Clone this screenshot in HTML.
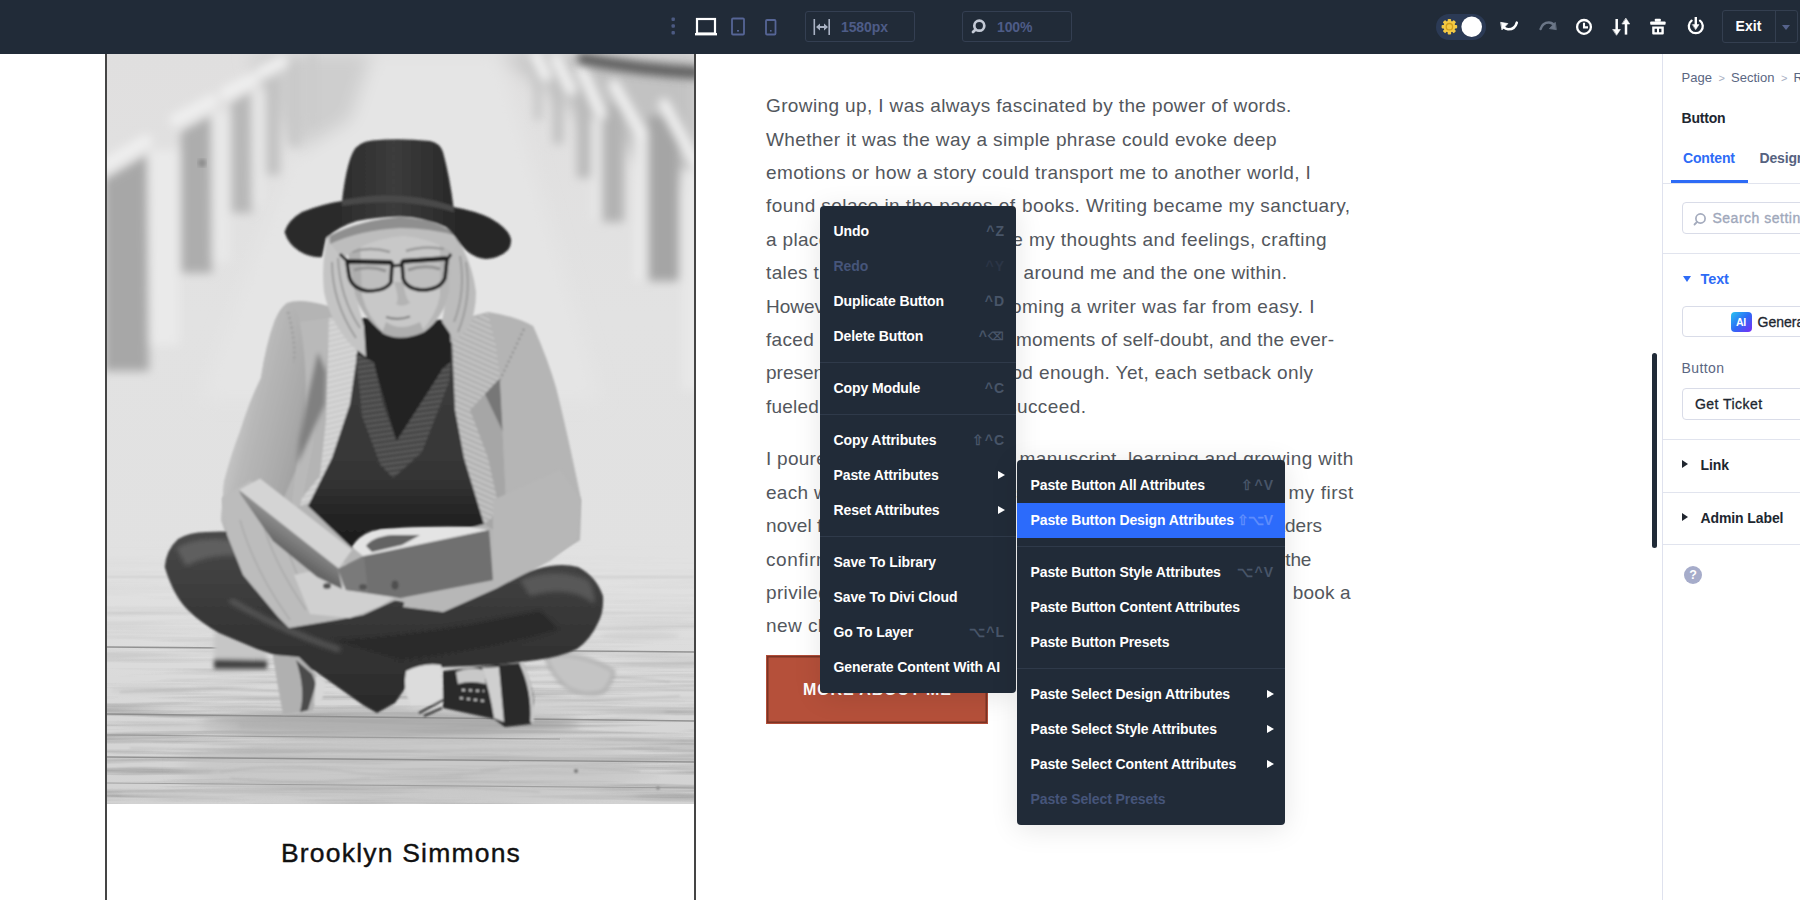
<!DOCTYPE html>
<html lang="en">
<head>
<meta charset="utf-8">
<title>Divi Builder</title>
<style>
*{box-sizing:border-box;margin:0;padding:0}
html,body{width:1800px;height:900px;overflow:hidden;background:#fff;font-family:"Liberation Sans",sans-serif;}
.abs{position:absolute}
#topbar{position:absolute;left:0;top:0;width:1800px;height:54px;background:#212b38;z-index:5}
#topbar .box{position:absolute;top:11px;height:31px;border:1px solid #343f52;border-radius:3px}
#topbar .box span{position:absolute;top:7px;font-size:14px;color:#4e5c87;letter-spacing:-0.1px;font-weight:bold}
/* card */
#card{position:absolute;left:105px;top:54px;width:591px;height:860px;border-left:2px solid #454545;border-right:2px solid #454545;background:#fff}
#photo{position:absolute;left:0;top:0;width:587px;height:750px;overflow:hidden;background:#d8d8d8}
#name{position:absolute;left:0;width:587px;top:786.3px;line-height:1;text-align:center;font-size:26.5px;color:#111;letter-spacing:1.2px;padding-left:1px;-webkit-text-stroke:0.4px #111}
/* body copy */
#copy{position:absolute;left:0;top:0.5px;width:1800px;height:0}
#copy .ln{position:absolute;left:0;width:1800px;height:33.4px;font-size:19px;line-height:33.4px;color:#53575d;white-space:nowrap;letter-spacing:0.38px}
#copy .ln span{position:absolute;left:766px;top:0}
#copy .ln span.r{left:auto;margin-right:-0.38px}
/* cta */
#cta{position:absolute;left:766px;top:655px;width:222px;height:69px;background:#b5503a;border:1px solid #b24d38;box-shadow:inset 0 0 0 1.500px #7b3425}
#cta b{font-weight:bold;position:absolute;left:36px;top:25px;font-size:16px;line-height:18px;letter-spacing:0.900px;color:#fff;white-space:nowrap}
/* menus */
.menu{position:absolute;background:#212b38;border-radius:4px;padding:8px 0;box-shadow:0 4px 28px rgba(0,0,0,.10);z-index:10}
.menu .it{position:relative;height:35px;line-height:35px;padding-left:13.5px;font-size:14px;font-weight:bold;color:#fff;white-space:nowrap;letter-spacing:-0.1px}
.menu .it i{position:absolute;right:12px;top:0;font-style:normal;font-weight:bold;color:#485568;letter-spacing:1px;font-size:14px;margin-right:-1px}
.menu .it.dis{color:#46557a}
.menu .it.dis i{color:#2b3546}
.menu .it.hl{background:#2c6bfb}
.menu .it.hl i{color:#5f8dfc}
.menu .sep{height:1px;background:#2f3a4a;margin:8px 0}
.menu .arr{position:absolute;right:11px;top:13px;width:0;height:0;border-left:7px solid #fff;border-top:4.5px solid transparent;border-bottom:4.5px solid transparent}
/* right panel */
#panel{position:absolute;left:1662px;top:54px;width:138px;height:846px;background:#fff;border-left:1px solid #dfe2ee;overflow:hidden;z-index:3}
#panel .hr{position:absolute;left:0;width:138px;height:1px;background:#e1e4ee}
#panel .t{position:absolute;white-space:nowrap}
</style>
</head>
<body>

<div id="topbar">
  <svg class="abs" style="left:660px;top:5px" width="130" height="45" viewBox="0 0 130 45">
    <g fill="#4c5a82"><rect x="11.5" y="12.5" width="3.4" height="3.4" rx="1"/><rect x="11.5" y="19.3" width="3.4" height="3.4" rx="1"/><rect x="11.5" y="26.1" width="3.4" height="3.4" rx="1"/></g>
    <rect x="37" y="14" width="18" height="14.5" fill="none" stroke="#fff" stroke-width="2.2"/><rect x="35" y="28" width="22" height="2.4" fill="#fff"/>
    <rect x="72" y="13.5" width="12" height="16" rx="1" fill="none" stroke="#566596" stroke-width="1.8"/><rect x="77" y="25" width="2" height="1.6" fill="#566596"/>
    <rect x="106" y="15" width="9.5" height="14.5" rx="1" fill="none" stroke="#566596" stroke-width="1.8"/><rect x="110" y="25" width="1.6" height="1.6" fill="#566596"/>
  </svg>
  <div class="box" style="left:805px;width:110px">
    <svg class="abs" style="left:7px;top:6px" width="18" height="18" viewBox="0 0 18 18"><g fill="#a9b2c3"><rect x="0.5" y="1" width="1.6" height="16"/><rect x="15.4" y="1" width="1.6" height="16"/><path d="M3 9l4-3.6v2.6h4V5.4L15 9l-4 3.600V10H7v2.600z"/></g></svg>
    <span style="left:35px">1580px</span>
  </div>
  <div class="box" style="left:962px;width:110px">
    <svg class="abs" style="left:7px;top:6px" width="18" height="18" viewBox="0 0 18 18"><circle cx="9.300" cy="7.700" r="5" fill="none" stroke="#c4cad6" stroke-width="2.700"/><path d="M5.600 11.400L3 14" stroke="#c4cad6" stroke-width="2.800" stroke-linecap="round"/></svg>
    <span style="left:34px">100%</span>
  </div>
  <div class="abs" style="left:1436px;top:14px;width:50px;height:26px;border-radius:13px;background:#2b3a55"></div>
  <svg class="abs" style="left:1436px;top:14px" width="50" height="26" viewBox="0 0 50 26">
    <g transform="translate(13.400,12.700)" fill="#f3c945">
      <circle r="5.900"/>
      <g id="ry"><rect x="-1.700" y="-7.800" width="3.400" height="15.600" rx="0.800"/></g>
      <use href="#ry" transform="rotate(45)"/><use href="#ry" transform="rotate(90)"/><use href="#ry" transform="rotate(135)"/>
      <circle r="3.200" fill="none" stroke="#d19e1d" stroke-width="1.300"/>
    </g>
    <circle cx="35.700" cy="12.700" r="10.300" fill="#fff"/>
  </svg>
  <svg class="abs" style="left:1496px;top:14px" width="212" height="26" viewBox="1496 14 212 26" fill="none" stroke-linecap="round" stroke-linejoin="round">
    <!-- undo -->
    <path d="M1516.800,22.600 Q1515,29.500 1508,29.300 Q1505.500,29 1503.800,27.300" stroke="#fff" stroke-width="2.500"/>
    <path d="M1501,22.400 L1507.800,23.600 L1502.200,29.600 Z" fill="#fff" stroke="#fff" stroke-width="0.800"/>
    <!-- redo -->
    <path d="M1540.600,29 Q1542.500,22.300 1549,22.400 Q1551.500,22.600 1553,24" stroke="#6b7687" stroke-width="2.500"/>
    <path d="M1556,29.600 L1549.400,28.600 L1555,22.600 Z" fill="#6b7687" stroke="#6b7687" stroke-width="0.800"/>
    <!-- clock -->
    <circle cx="1584" cy="26.900" r="6.900" stroke="#fff" stroke-width="2.300"/>
    <path d="M1584,22.800 V27.400 H1588" stroke="#fff" stroke-width="2.100" stroke-linecap="butt" stroke-linejoin="miter"/>
    <!-- arrows -->
    <path d="M1616.700,19 V31" stroke="#fff" stroke-width="2.500" stroke-linecap="butt"/>
    <path d="M1613,29.500 H1620.400 L1616.700,35 Z" fill="#fff" stroke="#fff" stroke-width="0.600"/>
    <path d="M1626,22.500 V34.600" stroke="#fff" stroke-width="2.500" stroke-linecap="butt"/>
    <path d="M1622.300,24 H1629.700 L1626,18.400 Z" fill="#fff" stroke="#fff" stroke-width="0.600"/>
    <!-- trash -->
    <g fill="#fff" stroke="none">
      <rect x="1654.800" y="18.800" width="6" height="3" rx="0.800"/>
      <rect x="1650.200" y="21.400" width="15.400" height="3.300" rx="0.800"/>
      <path d="M1652.200,26.500 H1663.800 V33.600 Q1663.800,34.600 1662.800,34.600 H1653.200 Q1652.200,34.600 1652.200,33.600 Z M1654.600,28.700 V32.300 H1657 V28.700 Z M1659,28.700 V32.300 H1661.400 V28.700 Z" fill-rule="evenodd"/>
    </g>
    <!-- power -->
    <path d="M1691.600,20.600 A7,7 0 1 0 1700,20.600" stroke="#fff" stroke-width="2.300"/>
    <path d="M1695.800,17 V25.500" stroke="#fff" stroke-width="2.400" stroke-linecap="butt"/>
    <path d="M1692.600,24.600 H1699 L1695.800,29.400 Z" fill="#fff" stroke="#fff" stroke-width="0.500"/>
  </svg>
  <div class="abs" style="left:1722px;top:10px;width:76px;height:33px;border:1px solid #343f50;border-radius:3px"></div>
  <div class="abs" style="left:1775px;top:11px;width:1px;height:31px;background:#343f50"></div>
  <div class="abs" style="left:1735.500px;top:18px;font-size:14px;line-height:16px;font-weight:bold;color:#fff;letter-spacing:0.1px">Exit</div>
  <div class="abs" style="left:1782px;top:24.500px;width:0;height:0;border-top:5px solid #56638c;border-left:4px solid transparent;border-right:4px solid transparent"></div>
</div>

<div id="card">
  <div id="photo">
<svg width="587" height="750" viewBox="107 54 587 750" style="position:absolute;left:0;top:0">
<defs>
  <filter id="f1" x="-5%" y="-5%" width="110%" height="110%"><feGaussianBlur stdDeviation="0.9"/></filter>
  <filter id="f2" x="-10%" y="-10%" width="120%" height="120%"><feGaussianBlur stdDeviation="2.2"/></filter>
  <filter id="f5" x="-20%" y="-20%" width="140%" height="140%"><feGaussianBlur stdDeviation="5"/></filter>
  <filter id="f9" x="-30%" y="-30%" width="160%" height="160%"><feGaussianBlur stdDeviation="9"/></filter>
  <linearGradient id="bg" x1="0" y1="54" x2="0" y2="804" gradientUnits="userSpaceOnUse">
    <stop offset="0" stop-color="#e0dfdf"/><stop offset=".35" stop-color="#e2e2e2"/><stop offset=".7" stop-color="#e1e1e1"/>
    <stop offset=".8" stop-color="#dcdcdc"/><stop offset=".9" stop-color="#d6d6d6"/><stop offset="1" stop-color="#d2d2d2"/>
  </linearGradient>
  <linearGradient id="postL" x1="0" y1="0" x2="0" y2="1"><stop offset="0" stop-color="#b4b4b4"/><stop offset="1" stop-color="#a2a2a2"/></linearGradient>
  <linearGradient id="leg" x1="0" y1="530" x2="0" y2="700" gradientUnits="userSpaceOnUse"><stop offset="0" stop-color="#4a4a4a"/><stop offset=".5" stop-color="#383838"/><stop offset="1" stop-color="#2c2c2c"/></linearGradient>
  <linearGradient id="hat" x1="340" y1="0" x2="460" y2="0" gradientUnits="userSpaceOnUse"><stop offset="0" stop-color="#2c2c2c"/><stop offset=".45" stop-color="#3c3c3c"/><stop offset="1" stop-color="#272727"/></linearGradient>
  <pattern id="ribl" width="5" height="5" patternUnits="userSpaceOnUse" patternTransform="rotate(-14)"><rect width="5" height="5" fill="#d6d6d6"/><rect y="0" width="5" height="1.400" fill="#c2c2c2"/></pattern>
  <pattern id="ribr" width="5" height="5" patternUnits="userSpaceOnUse" patternTransform="rotate(24)"><rect width="5" height="5" fill="#c2c2c2"/><rect y="0" width="5" height="1.600" fill="#a8a8a8"/></pattern>
  <pattern id="ribv" width="5" height="5" patternUnits="userSpaceOnUse" patternTransform="rotate(-8)"><rect width="5" height="5" fill="#585858"/><rect y="0" width="5" height="1.800" fill="#3e3e3e"/></pattern>
  <linearGradient id="cov" x1="290" y1="528" x2="278" y2="546" gradientUnits="userSpaceOnUse"><stop offset="0" stop-color="#8c8c8c"/><stop offset="1" stop-color="#666"/></linearGradient>
  <filter id="wood" x="0" y="0" width="100%" height="100%" color-interpolation-filters="sRGB">
    <feTurbulence type="fractalNoise" baseFrequency="0.005 0.16" numOctaves="3" seed="7"/>
    <feColorMatrix type="matrix" values="0 0 0 0 0.55  0 0 0 0 0.55  0 0 0 0 0.55  1.5 0 0 0 -0.62"/>
  </filter>
  <linearGradient id="fadeg" x1="0" y1="540" x2="0" y2="804" gradientUnits="userSpaceOnUse"><stop offset="0" stop-color="#000"/><stop offset=".25" stop-color="#222"/><stop offset=".45" stop-color="#777"/><stop offset=".7" stop-color="#fff"/><stop offset="1" stop-color="#fff"/></linearGradient>
  <mask id="fadeup" maskUnits="userSpaceOnUse" x="107" y="540" width="587" height="264"><rect x="107" y="540" width="587" height="264" fill="url(#fadeg)"/></mask>
  <linearGradient id="vest" x1="0" y1="345" x2="0" y2="545" gradientUnits="userSpaceOnUse"><stop offset="0" stop-color="#3d3d3d"/><stop offset=".65" stop-color="#363636"/><stop offset=".85" stop-color="#242424"/><stop offset="1" stop-color="#1c1c1c"/></linearGradient>
  <linearGradient id="lsl" x1="225" y1="430" x2="305" y2="450" gradientUnits="userSpaceOnUse"><stop offset="0" stop-color="#cdcdcd"/><stop offset=".3" stop-color="#b8b8b8"/><stop offset=".75" stop-color="#aaaaaa"/><stop offset="1" stop-color="#a0a0a0"/></linearGradient>
  <filter id="fb" filterUnits="userSpaceOnUse" x="107" y="30" width="600" height="200"><feGaussianBlur stdDeviation="4"/></filter>
</defs>
<rect x="107" y="54" width="587" height="750" fill="url(#bg)"/>
<!-- blurred background: pier posts & ropes -->
<g filter="url(#f9)">
  <polygon points="330,54 500,54 600,400 200,400" fill="#e5e5e5"/>
  <polygon points="500,54 700,54 700,190 640,160 560,100" fill="#c2c2c2"/>
  <polygon points="250,54 372,54 350,120 300,150 268,104" fill="#cecece"/>
</g>
<g filter="url(#f5)">
  <!-- left posts -->
  <polygon points="104,180 147,155 149,371 104,371" fill="#a7a7a7"/>
  <polygon points="181,132 211,116 212,273 181,273" fill="#adadad"/>
  <polygon points="231,103 251,92 252,213 231,213" fill="#b8b8b8"/>
  <rect x="266" y="78" width="14" height="97" fill="#c2c2c2"/>
  <rect x="289" y="62" width="11" height="84" fill="#c8c8c8"/>
  <rect x="308" y="54" width="9" height="70" fill="#cbcbcb"/>
  <!-- light faces -->
  <rect x="149" y="150" width="30" height="195" fill="#eaeaea"/>
  <rect x="212" y="112" width="18" height="150" fill="#e8e8e8"/>
  <rect x="252" y="90" width="13" height="115" fill="#e6e6e6"/>
  <!-- white caps -->
  <g stroke="#efefef" stroke-width="13" stroke-linecap="round">
    <path d="M104,166 L146,141"/><path d="M176,120 L212,101"/><path d="M226,93 L252,80"/><path d="M262,72 L282,62"/>
  </g>
  <!-- right posts -->
  <rect x="648" y="116" width="31" height="165" fill="#a5a5a5"/>
  <rect x="602" y="104" width="22" height="118" fill="#b3b3b3"/>
  <rect x="577" y="84" width="14" height="94" fill="#bababa"/>
  <rect x="553" y="68" width="10" height="76" fill="#c0c0c0"/>
  <rect x="534" y="58" width="8" height="62" fill="#c6c6c6"/>
  <rect x="634" y="130" width="14" height="150" fill="#e9e9e9"/>
  <rect x="591" y="120" width="11" height="100" fill="#e6e6e6"/>
  <rect x="682" y="170" width="20" height="220" fill="#e8e8e8"/>
  <!-- rope loops -->
  <g stroke="#f1f1f1" stroke-width="11" stroke-linecap="round" fill="none">
    <path d="M536,56 L546,76"/><path d="M556,59 L571,90"/><path d="M581,68 L601,114"/><path d="M614,85 L640,131"/><path d="M664,104 L696,164"/>
  </g>
</g>
<g filter="url(#fb)">
  <path d="M578,58 Q640,70 700,73" stroke="#5a5a5a" stroke-width="12" fill="none" opacity=".95"/>
</g>
<g filter="url(#f2)">
  <circle cx="202" cy="163" r="4" fill="#8a8a8a"/>
</g>
<!-- floor planks -->
<g mask="url(#fadeup)"><rect x="107" y="540" width="587" height="264" fill="#888" filter="url(#wood)"/></g>
<g filter="url(#f9)">
  <ellipse cx="410" cy="768" rx="230" ry="36" fill="#c0c0c0" opacity=".55"/>
</g>
<g filter="url(#f5)">
  <ellipse cx="390" cy="724" rx="190" ry="13" fill="#a4a4a4" opacity=".75"/>
</g>
<g filter="url(#f2)" fill="#c9c9c9" opacity=".55">
  <ellipse cx="560" cy="708" rx="60" ry="5"/><ellipse cx="640" cy="712" rx="26" ry="5"/>
  <ellipse cx="300" cy="772" rx="90" ry="7"/><ellipse cx="560" cy="776" rx="100" ry="7"/>
  <ellipse cx="180" cy="726" rx="60" ry="4"/><ellipse cx="420" cy="746" rx="160" ry="4"/>
  <ellipse cx="620" cy="740" rx="60" ry="4"/><ellipse cx="200" cy="795" rx="80" ry="4"/><ellipse cx="520" cy="796" rx="120" ry="4"/>
  <ellipse cx="150" cy="690" rx="40" ry="5"/><ellipse cx="640" cy="636" rx="40" ry="4"/>
</g>
<g filter="url(#f1)" stroke-linecap="butt">
  <g stroke="#c4c4c4" stroke-width="1.500" opacity=".7">
    <line x1="107" y1="577" x2="694" y2="577"/><line x1="107" y1="613" x2="694" y2="613"/>
    <line x1="500" y1="698" x2="694" y2="698"/>
  </g>
  <g fill="none" stroke="#adadad" stroke-width="1.200" opacity=".7">
    <path d="M220,772 q60,-10 130,0 t150,-2"/><path d="M230,778 q70,8 140,0"/>
    <path d="M480,770 q70,-8 160,2"/><path d="M120,692 q120,-6 200,2"/><path d="M420,700 q100,6 260,-4"/>
    <path d="M130,748 q200,6 540,0"/><path d="M560,680 q40,-6 110,2"/><path d="M300,790 q100,-8 240,2"/>
  </g>
  <circle cx="576" cy="771" r="2" fill="#777"/><circle cx="658" cy="788" r="1.600" fill="#777"/>
</g>
<g stroke-linecap="butt">
  <g stroke="#8a8a8a" stroke-width="1.400" opacity=".9">
    <line x1="107" y1="647" x2="694" y2="652"/>
    <line x1="107" y1="714" x2="694" y2="721"/>
    <line x1="107" y1="757" x2="694" y2="762"/>
  </g>
  <g stroke="#979797" stroke-width="1.200" opacity=".85">
    <line x1="107" y1="735" x2="560" y2="739"/>
    <line x1="107" y1="783" x2="694" y2="788"/>
  </g>
</g>
<!-- bag behind left knee -->
<g filter="url(#f2)">
  <polygon points="214,631 267,640 267,668 214,668" fill="#c6c6c6"/>
  <polygon points="214,659 267,660 267,669 214,669" fill="#454545"/>
  <!-- sweater on floor right -->
  <path d="M545,656 Q580,650 614,671 Q612,684 603,692 Q584,698 566,687 Q552,676 545,656 Z" fill="#c4c4c4" stroke="#9c9c9c" stroke-width="2"/>
</g>
<!-- figure -->
<g filter="url(#f1)">
  <!-- cardigan body -->
  <path d="M287,303 Q300,298 328,306 L362,318 L450,322 L488,312 Q515,316 533,326 Q548,360 556,388 Q568,436 581,500 L580,540 L517,578 L440,612 L400,612 L350,622 L287,629 L243,568 L226,534 L221,520 L224,482 Q232,452 240,432 Q250,400 261,378 Q266,344 275,320 Q280,308 287,303 Z" fill="#b4b4b4"/>
  <!-- left sleeve -->
  <path d="M287,303 Q296,302 300,326 Q310,380 302,434 L296,470 L262,548 L243,568 L226,534 L221,520 L224,482 Q232,452 240,432 Q250,400 261,378 Q266,344 275,320 Z" fill="url(#lsl)"/>
  
  <!-- body panels -->
  <path d="M300,322 L330,318 L322,400 L302,500 L290,520 L296,470 L303,436 Q311,380 300,322 Z" fill="#b9b9b9"/>
  <path d="M470,410 L500,378 L503,440 L506,500 L494,530 L484,524 Z" fill="#a6a6a6"/>
  <path d="M483,390 L500,379 L503,432 Z" fill="#777"/>
  <g filter="url(#f2)"><path d="M318,352 L326,372 L325,404 L297,465 L299,440 L308,396 Z" fill="#808080"/></g>
  <!-- right sleeve -->
  <path d="M533,326 Q548,360 556,388 Q568,436 581,500 L580,540 L540,562 L494,532 L506,500 L503,440 L500,380 L524,329 Z" fill="#b5b5b5"/>
  <path d="M524,329 L500,380" stroke="#8a8a8a" stroke-width="2" stroke-dasharray="2 3" fill="none"/>
  <path d="M288,312 q8,30 6,50" stroke="#9a9a9a" stroke-width="2.500" stroke-dasharray="2 3" fill="none"/>
  <!-- lapels -->
  <path d="M329,318 L346,318 L366,326 L360,352 L350,404 L332,458 L311,502 L300,506 L302,498 L320,476 L326,420 Z" fill="url(#ribl)"/>
  <path d="M452,326 L488,313 L496,346 L500,378 L470,410 L488,458 L500,512 L484,524 L464,458 L455,410 L452,344 Z" fill="url(#ribr)"/>
  <!-- vest -->
  <path d="M358,348 L452,342 L455,410 L464,458 L484,524 L470,528 L380,530 L352,548 L308,506 L332,458 L350,404 Z" fill="url(#vest)"/>
  <!-- turtleneck -->
  <path d="M362,318 L450,320 L451,366 L443,370 L397,442 L374,364 L357,356 Z" fill="#222"/>
  <!-- rib V band -->
  <path d="M356,354 L374,362 L383,404 L396.500,441 L428,392 L443,368 L451,362 L449,382 L422,452 L393,478 L380,464 L362,416 Z" fill="url(#ribv)"/>
  <!-- hair -->
  <path d="M328,236 Q321,262 324,292 Q330,322 352,346 L366,357 L364,326 L356,296 L346,258 L352,236 Z" fill="#c4c4c4"/>
  <path d="M446,230 L458,240 Q472,262 476,292 Q476,314 468,328 L455,341 L442,322 L447,292 L450,258 Z" fill="#bcbcbc"/>
  <path d="M332,262 q0,40 24,76 M338,258 q2,40 22,70 M466,262 q6,36 -8,70 M460,256 q6,36 -6,66" stroke="#9c9c9c" stroke-width="2" fill="none"/>
  <!-- face -->
  <path d="M344,238 Q400,220 452,236 L449,292 Q444,318 424,332 Q400,342 382,332 Q362,316 356,294 Z" fill="#c8c8c8"/>
  <path d="M346,240 L360,240 L362,296 Q368,318 384,332 Q362,318 355,294 Z" fill="#b0b0b0"/>
  <path d="M452,238 L440,240 L440,296 Q436,316 420,333 Q444,318 449,292 Z" fill="#b6b6b6"/>
  <path d="M386,322 Q400,332 420,322 L424,332 Q400,343 382,333 Z" fill="#aeaeae"/>
  <path d="M394,282 Q400,300 396,304 Q402,308 410,303 Q404,296 404,282 Z" fill="#b4b4b4"/>
  <path d="M386,317 q12,4 24,-0.500" stroke="#828282" stroke-width="2.200" fill="none"/>
  <path d="M354,270 q16,-5 32,1 M408,270 q16,-6 32,-1" stroke="#8a8a8a" stroke-width="3" fill="none"/>
  <path d="M352,252 q18,-6 38,0 M406,251 q18,-6 38,-2" stroke="#9a9a9a" stroke-width="2.500" fill="none"/>
  <!-- bangs / hair under brim -->
  <path d="M326,238 Q350,222 400,217 Q440,220 458,240 L452,252 Q430,238 404,236 Q370,238 342,258 Z" fill="#bdbdbd"/>
  <path d="M330,236 Q360,220 400,217 Q440,219 457,236 Q430,228 400,228 Q360,230 330,244 Z" fill="#8f8f8f"/>
  <!-- glasses -->
  <g fill="#a8a8a8" fill-opacity=".3" stroke="#222" stroke-width="3.600" stroke-linejoin="round">
    <path d="M347,262 L392,263 L391,282 Q386,291 368,291 Q352,289 349,276 Z"/>
    <path d="M402,262 L447,259 L445,278 Q440,290 422,290 Q406,289 403,278 Z"/>
  </g>
  <path d="M347,261 L392,262 M402,261 L447,258" stroke="#222" stroke-width="4.200" fill="none"/>
  <path d="M340,254 L348,262 M392,266 L402,265 M447,260 L451,254" stroke="#222" stroke-width="3" fill="none"/>
  <!-- hat -->
  <path d="M284.500,232 Q288,220 302,212 Q322,204 342,201 Q346,166 353,152 Q358,142 372,140.500 Q400,138 430,141 Q440,143 443,152 Q450,178 453.500,207 Q476,211 490,218 Q506,227 510,236 Q513,243 508,250 Q500,258 486,259 Q470,258 458,241 Q452,232 446,227 Q424,217 400,216.500 Q376,217 357,221 Q340,226 326,238 Q324,248 322,257 Q310,258 299,251 Q288,244 284.500,232 Z" fill="url(#hat)"/>
  <path d="M342,200 Q400,188 453.500,206 L454,212 Q400,196 342,206 Z" fill="#484848"/>
</g>
<!-- legs -->
<g filter="url(#f1)">
  <path d="M164.700,567 Q166,550 178,539 Q190,532 206,532 Q240,530 300,538 L360,592 L443,612 L497,588 Q520,574 537,569 Q560,562 578,567 Q596,576 603,596 Q604,612 598,623 Q590,640 577,649 Q560,657 537,660 L497,665 L443,667 L417,671 L395,703 L377,713 L363,705 L315,671 L275,655 L257,649 L219,633 Q200,622 190,612 Q174,598 164.700,567 Z" fill="url(#leg)"/>
  <!-- leg highlights / creases -->
  <g filter="url(#f2)">
    <path d="M176,548 Q196,536 232,540 L262,560 Q220,548 186,566 Z" fill="#5e5e5e"/>
    <path d="M520,580 Q556,566 588,580 Q596,592 594,604 Q570,584 530,596 Z" fill="#585858"/>
    <path d="M330,640 Q400,636 470,624 L540,610 L560,630 Q480,652 400,660 Z" fill="#2a2a2a"/>
    <path d="M230,600 Q280,630 340,650" stroke="#585858" stroke-width="5" fill="none"/>
  </g>
  <!-- right sleeve lower band -->
  <path d="M403,607 L443,612 L497,588 L550,561 L577,540 L581,500 L560,470 L493,500 L493,582 L406,598 Z" fill="#b7b7b7"/>
  <!-- left sleeve lower part -->
  <path d="M222,498 L227,535 L243,575 L278,617 L289,628 L337,620 L363,615 L400,598 L340,560 L300,520 L250,480 Z" fill="#bcbcbc"/>
  <path d="M240,520 q14,50 50,100 M262,520 q10,40 44,90 M284,540 q10,30 30,70" stroke="#aaa" stroke-width="1.500" fill="none"/>
  <!-- hand -->
  <path d="M294,575 L316,570 L340,586 L398,580 L396,596 L380,606 L350,618 L310,614 Z" fill="#d0d0d0"/>
  <!-- book -->
  <path d="M260,478.500 L352,550 L338,569 L239,490 Z" fill="#d4d4d4"/>
  <path d="M239,490 L338,568 L342,589 L317,577 L273,541 L241,495 Z" fill="url(#cov)"/>
  <path d="M352,547 Q358,536 372,531 Q400,526 470,527 L489,530 L420,545 L364,557 Z" fill="#e4e4e4"/>
  <path d="M366,546 Q372,537 392,535 L420,535 L402,545 L372,552 Z" fill="#636363"/>
  <path d="M338,569 L364,556 L489,530 L493,580 L400,598 L346,590 Z" fill="#707070"/>
  <path d="M338,569 L364,556 L368,592 L346,590 Z" fill="#7a7a7a"/>
  <!-- nails -->
  <ellipse cx="327" cy="586" rx="4" ry="3" fill="#555"/><ellipse cx="363" cy="587" rx="4" ry="3" fill="#555"/><ellipse cx="395" cy="585" rx="3.500" ry="4.500" fill="#505050"/>
  <!-- left shoe sole -->
  <path d="M272.700,654.700 L299,657 L315,673 L320.700,684 L312.700,710.700 L283,714.700 L278,686.700 Z" fill="#b0b0b0"/>
  <path d="M296,660 L312,674 L316,684 L308,710 L300,712 Q306,690 296,660 Z" fill="#4c4c4c"/>
  <path d="M316,676 L326,682 L322,700 L314,704 Z" fill="#d8d8d8"/>
  <!-- sock -->
  <path d="M406,671 Q424,662 441,665 L443,703 L411,705 Q402,690 406,671 Z" fill="#dcdcdc"/>
  <!-- right boot -->
  <path d="M443,671 L497,665 L523,663 Q534,690 534,703 L531,724 L505,727 L494,719 L443,708 Z" fill="#2c2c2c"/>
  <path d="M482,668 L499,667 L504,722 L494,718 Q490,692 482,668 Z" fill="#cfcfcf"/>
  <path d="M456,672 Q470,666 484,670 L486,684 Q470,680 458,684 Z" fill="#c8c8c8"/>
  <path d="M462,690 l22,1 M460,698 l24,3" stroke="#d0d0d0" stroke-width="2" stroke-dasharray="3 4"/>
  <path d="M521,663 Q534,690 532,722" stroke="#c9c9c9" stroke-width="3.500" fill="none"/>
  <path d="M419,713 l24,-13 M424,716 l18,-8" stroke="#333" stroke-width="2"/>
</g>
</svg>
</div>
  <div id="name">Brooklyn Simmons</div>
</div>

<div id="copy">
<div class="ln" style="top:88.8px"><span>Growing up, I was always fascinated by the power of words.</span></div>
<div class="ln" style="top:122.2px"><span>Whether it was the way a simple phrase could evoke deep</span></div>
<div class="ln" style="top:155.5px"><span>emotions or how a story could transport me to another world, I</span></div>
<div class="ln" style="top:188.9px"><span style="letter-spacing:0.419px">found solace in the pages of</span><span class="r" style="right:450px;letter-spacing:0.381px;margin-right:-0.381px">books. Writing became my sanctuary,</span></div>
<div class="ln" style="top:222.3px"><span style="letter-spacing:0.327px">a place where I could</span><span class="r" style="right:473.5px;letter-spacing:0.406px;margin-right:-0.406px">explore my thoughts and feelings, crafting</span></div>
<div class="ln" style="top:255.6px"><span style="letter-spacing:0.355px">tales that reflected the world</span><span class="r" style="right:513px;letter-spacing:0.278px;margin-right:-0.278px">around me and the one within.</span></div>
<div class="ln" style="top:289.0px"><span style="letter-spacing:0.0px">However, the journey to</span><span class="r" style="right:485.5px;letter-spacing:0.428px;margin-right:-0.428px">becoming a writer was far from easy. I</span></div>
<div class="ln" style="top:322.4px"><span style="letter-spacing:0.338px">faced numerous rejections,</span><span class="r" style="right:466px;letter-spacing:0.216px;margin-right:-0.216px">moments of self-doubt, and the ever-</span></div>
<div class="ln" style="top:355.8px"><span style="letter-spacing:0.0px">present fear of not being</span><span class="r" style="right:487px;letter-spacing:0.38px;margin-right:-0.38px">good enough. Yet, each setback only</span></div>
<div class="ln" style="top:389.1px"><span style="letter-spacing:0.224px">fueled my determination to</span><span class="r" style="right:714px;letter-spacing:0.409px;margin-right:-0.409px">succeed.</span></div>
<div class="ln" style="top:441.9px"><span style="letter-spacing:0.257px">I poured my heart into every</span><span class="r" style="right:446.6px;letter-spacing:0.415px;margin-right:-0.415px">manuscript, learning and growing with</span></div>
<div class="ln" style="top:475.3px"><span style="letter-spacing:0.286px">each word I wrote. After years</span><span class="r" style="right:446.6px;letter-spacing:0.527px;margin-right:-0.527px">my first</span></div>
<div class="ln" style="top:508.6px"><span style="letter-spacing:0.062px">novel found its way to</span><span class="r" style="right:478px;letter-spacing:0.013px;margin-right:-0.013px">readers</span></div>
<div class="ln" style="top:542.0px"><span style="letter-spacing:0.6px">confirmed that I had found</span><span class="r" style="right:488.6px;letter-spacing:-0.106px;margin-right:0.106px">the</span></div>
<div class="ln" style="top:575.4px"><span style="letter-spacing:0.365px">privilege of sharing stories,</span><span class="r" style="right:449.4px;letter-spacing:0.171px;margin-right:-0.171px">book a</span></div>
<div class="ln" style="top:608.8px"><span style="letter-spacing:0.437px">new chapter begins today.</span></div>
</div>

<div id="cta"><b>MORE ABOUT ME</b></div>

<div class="menu" style="left:820px;top:206px;width:196px">
  <div class="it">Undo<i>^Z</i></div>
  <div class="it dis">Redo<i>^Y</i></div>
  <div class="it">Duplicate Button<i>^D</i></div>
  <div class="it">Delete Button<i>^<span style="font-size:11px;vertical-align:1px">⌫</span></i></div>
  <div class="sep"></div>
  <div class="it">Copy Module<i>^C</i></div>
  <div class="sep"></div>
  <div class="it">Copy Attributes<i>⇧^C</i></div>
  <div class="it">Paste Attributes<u class="arr"></u></div>
  <div class="it">Reset Attributes<u class="arr"></u></div>
  <div class="sep"></div>
  <div class="it">Save To Library</div>
  <div class="it">Save To Divi Cloud</div>
  <div class="it">Go To Layer<i>⌥^L</i></div>
  <div class="it">Generate Content With AI</div>
</div>

<div class="menu" style="left:1017px;top:459.5px;width:268px">
  <div class="it">Paste Button All Attributes<i>⇧^V</i></div>
  <div class="it hl">Paste Button Design Attributes<i style="letter-spacing:-0.5px;margin-right:0.5px">⇧⌥V</i></div>
  <div class="sep"></div>
  <div class="it">Paste Button Style Attributes<i>⌥^V</i></div>
  <div class="it">Paste Button Content Attributes</div>
  <div class="it">Paste Button Presets</div>
  <div class="sep"></div>
  <div class="it">Paste Select Design Attributes<u class="arr"></u></div>
  <div class="it">Paste Select Style Attributes<u class="arr"></u></div>
  <div class="it">Paste Select Content Attributes<u class="arr"></u></div>
  <div class="it dis">Paste Select Presets</div>
</div>

<div class="abs" style="left:1652px;top:353px;width:5px;height:195px;border-radius:3px;background:#212b38;z-index:4"></div>
<div id="panel">
  <div class="t" style="left:18.5px;top:16px;font-size:13px;color:#5a6682">Page <span style="color:#a7aec2;font-size:11px;margin:0 2.5px 0 3px">&gt;</span> Section <span style="color:#a7aec2;font-size:11px;margin:0 2.5px 0 3px">&gt;</span> Row</div>
  <div class="t" style="left:18.5px;top:56px;font-size:14px;font-weight:bold;color:#20262f;letter-spacing:-0.2px">Button</div>
  <div class="t" style="left:20px;top:96px;font-size:14px;font-weight:bold;color:#2d6bf6;letter-spacing:-0.15px">Content</div>
  <div class="t" style="left:96.500px;top:96px;font-size:14px;font-weight:bold;color:#566280;letter-spacing:-0.15px">Design</div>
  <div class="abs" style="left:8px;top:126px;width:77px;height:3px;background:#2d6bf6"></div>
  <div class="hr" style="top:128.500px"></div>
  <div class="abs" style="left:18.5px;top:148px;width:140px;height:32px;border:1px solid #d9dce8;border-radius:4px">
    <svg class="abs" style="left:9px;top:8px" width="16" height="16" viewBox="0 0 16 16"><circle cx="8.500" cy="7.500" r="4.600" fill="none" stroke="#a4abbd" stroke-width="1.700"/><path d="M5 11L2.500 13.500" stroke="#a4abbd" stroke-width="1.800" stroke-linecap="round"/></svg>
    <div class="t" style="left:30px;top:6.500px;font-size:14px;color:#a0a8bb;-webkit-text-stroke:0.35px #a0a8bb;letter-spacing:0.5px">Search settings</div>
  </div>
  <div class="hr" style="top:199px"></div>
  <div class="abs" style="left:19.500px;top:222px;width:0;height:0;border-top:6px solid #2d6bf6;border-left:4.500px solid transparent;border-right:4.500px solid transparent"></div>
  <div class="t" style="left:37.500px;top:217px;font-size:14.500px;font-weight:bold;color:#2d6bf6;letter-spacing:-0.1px">Text</div>
  <div class="abs" style="left:18.5px;top:252px;width:140px;height:31px;border:1px solid #d9dce8;border-radius:4px">
    <div class="abs" style="left:48px;top:5px;width:21px;height:20px;border-radius:4px;background:linear-gradient(135deg,#27c4f0 0%,#2d6bf6 50%,#7a2cf5 100%);color:#fff;font-size:10.500px;font-weight:bold;line-height:20px;text-align:center;letter-spacing:-0.2px">AI</div>
    <div class="t" style="left:75px;top:6.500px;font-size:14px;color:#20262f;-webkit-text-stroke:0.3px #20262f">Generate Text</div>
  </div>
  <div class="t" style="left:18.5px;top:305.500px;font-size:14px;color:#5a6682;letter-spacing:0.4px">Button</div>
  <div class="abs" style="left:18.5px;top:334px;width:140px;height:32px;border:1px solid #d9dce8;border-radius:4px">
    <div class="t" style="left:12.500px;top:7px;font-size:14px;color:#20262f;-webkit-text-stroke:0.3px #20262f;letter-spacing:0.45px">Get Ticket</div>
  </div>
  <div class="hr" style="top:385px"></div>
  <div class="abs" style="left:19px;top:405.500px;width:0;height:0;border-left:6px solid #20262f;border-top:4.500px solid transparent;border-bottom:4.500px solid transparent"></div>
  <div class="t" style="left:37.500px;top:402.500px;font-size:14px;font-weight:bold;color:#20262f;letter-spacing:-0.1px">Link</div>
  <div class="hr" style="top:437.500px"></div>
  <div class="abs" style="left:19px;top:458.500px;width:0;height:0;border-left:6px solid #20262f;border-top:4.500px solid transparent;border-bottom:4.500px solid transparent"></div>
  <div class="t" style="left:37.500px;top:455.500px;font-size:14px;font-weight:bold;color:#20262f;letter-spacing:-0.1px">Admin Label</div>
  <div class="hr" style="top:490px"></div>
  <div class="abs" style="left:21px;top:511.500px;width:18px;height:18px;border-radius:50%;background:#a6acca;color:#fff;font-size:12.500px;font-weight:bold;line-height:18.500px;text-align:center">?</div>
</div>

</body>
</html>
